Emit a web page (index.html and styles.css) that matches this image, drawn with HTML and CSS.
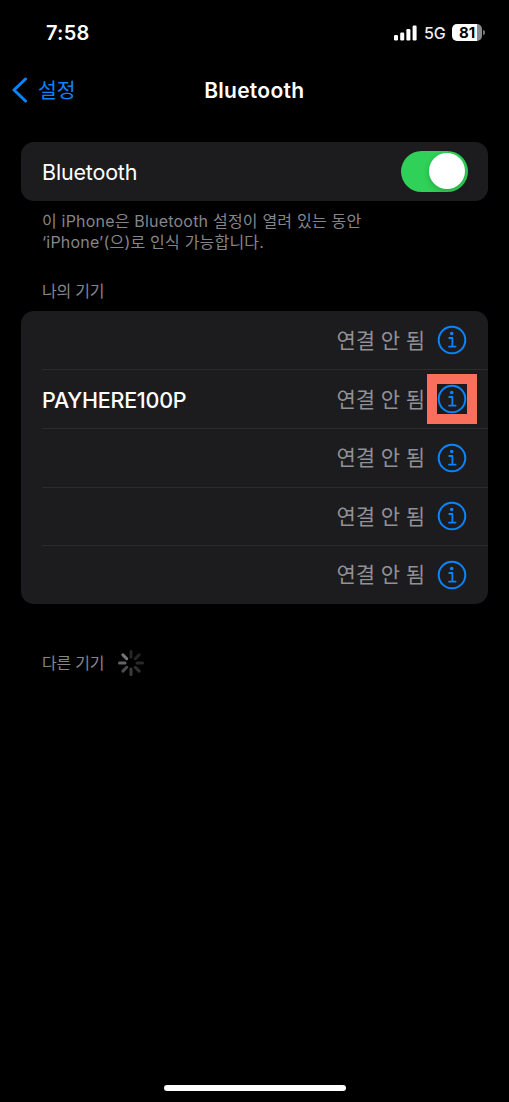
FILE: index.html
```
<!DOCTYPE html>
<html lang="ko">
<head>
<meta charset="utf-8">
<meta name="viewport" content="width=device-width">
<title>Bluetooth</title>
<link rel="stylesheet" href="styles.css">
</head>
<body>
<svg class="defs" aria-hidden="true">
  <symbol id="info" viewBox="0 0 30 30">
    <circle cx="15" cy="15" r="13.3" fill="none" stroke="currentColor" stroke-width="2"/>
    <circle cx="14.7" cy="8.5" r="1.8" fill="currentColor"/>
    <path d="M12.2 13h3.2v8.6M12 21.6h6.6" fill="none" stroke="currentColor" stroke-width="1.8" stroke-linecap="round" stroke-linejoin="round"/>
  </symbol>
</svg>
<div class="screen">
  <header class="status">
    <span class="time">7:58</span>
    <div class="indicators">
      <svg class="signal" viewBox="0 0 23 16" fill="#fff">
        <rect x="0" y="10" width="4" height="5.5" rx="1.2"/>
        <rect x="6.2" y="7.5" width="4" height="8" rx="1.2"/>
        <rect x="12.4" y="4" width="4" height="11.5" rx="1.2"/>
        <rect x="18.6" y="0.5" width="4" height="15" rx="1.2"/>
      </svg>
      <span class="network">5G</span>
      <div class="battery"><span class="level">81</span></div>
      <i class="battery-tip"></i>
    </div>
  </header>
  <nav class="nav">
    <a class="back">
      <svg class="chevron" viewBox="0 0 16 26"><path d="M13.5 2 2 13l11.5 11" fill="none" stroke="currentColor" stroke-width="3" stroke-linecap="round" stroke-linejoin="round"/></svg>
      <span class="back-label">설정</span>
    </a>
    <h1 class="title">Bluetooth</h1>
  </nav>
  <main>
    <section class="card toggle-card">
      <span class="label bt-label">Bluetooth</span>
      <span class="switch"><i class="knob"></i></span>
    </section>
    <p class="note"><span class="note-first">이 iPhone은 Bluetooth 설정이 열려 있는 동안</span><br><span class="note-second">‘iPhone’(으)로 인식 가능합니다.</span></p>
    <h2 class="heading">나의 기기</h2>
    <ul class="card list">
      <li class="row"><span class="state">연결 안 됨</span><svg class="info"><use href="#info"/></svg></li>
      <li class="row"><span class="label device">PAYHERE100P</span><span class="state">연결 안 됨</span><span class="target"><svg class="info"><use href="#info"/></svg></span></li>
      <li class="row"><span class="state">연결 안 됨</span><svg class="info"><use href="#info"/></svg></li>
      <li class="row"><span class="state">연결 안 됨</span><svg class="info"><use href="#info"/></svg></li>
      <li class="row"><span class="state">연결 안 됨</span><svg class="info"><use href="#info"/></svg></li>
    </ul>
    <div class="searching">
      <h2 class="heading">다른 기기</h2>
      <svg class="spinner" viewBox="-13 -13 26 26" stroke-width="3" stroke-linecap="round">
        <path d="M0-6v-5.5" stroke="#27272a"/>
        <path d="M0-6v-5.5" stroke="#252527" transform="rotate(45)"/>
        <path d="M0-6v-5.5" stroke="#29292b" transform="rotate(90)"/>
        <path d="M0-6v-5.5" stroke="#303033" transform="rotate(135)"/>
        <path d="M0-6v-5.5" stroke="#3c3c3f" transform="rotate(180)"/>
        <path d="M0-6v-5.5" stroke="#4b4b4e" transform="rotate(225)"/>
        <path d="M0-6v-5.5" stroke="#636366" transform="rotate(270)"/>
        <path d="M0-6v-5.5" stroke="#77777b" transform="rotate(315)"/>
      </svg>
    </div>
  </main>
  <div class="home"></div>
</div>
</body>
</html>
```

FILE: styles.css
```
* { box-sizing: border-box; }
body {
  margin: 0;
  background: #000;
  color: #fff;
  font-family: Inter, "Noto Sans CJK KR", sans-serif;
}
.defs { position: absolute; width: 0; height: 0; }
.screen { display: flex; flex-direction: column; height: 1102px; overflow: hidden; }
.status {
  display: flex;
  justify-content: space-between;
  align-items: center;
  height: 65px;
  padding: 0 24px 0 46px;
}
.time { font-size: 20px; font-weight: 600; letter-spacing: 0.2px; }
.indicators { display: flex; align-items: center; }
.signal { width: 23px; height: 16px; }
.network { width: 23px; margin-left: 7px; font-size: 16px; font-weight: 500; letter-spacing: -0.2px; color: #eee; }
.battery {
  display: flex;
  justify-content: center;
  align-items: center;
  width: 30px;
  height: 17px;
  margin-left: 5px;
  border-radius: 5px;
  background: linear-gradient(to right, #fff 0 25px, #8a8a8a 25px);
}
.level { color: #000; font-size: 15px; line-height: 17px; font-weight: 700; letter-spacing: 0; }
.battery-tip { width: 2px; height: 5px; margin-left: 1px; border-radius: 0 2px 2px 0; background: #777; }
.nav { display: grid; grid-template-columns: 1fr auto 1fr; align-items: center; height: 50px; padding-left: 11.5px; }
.back { display: flex; align-items: center; gap: 10.5px; color: #0a84ff; font-size: 20.5px; line-height: 30px; }
.back-label { padding-top: 2px; }
.chevron { width: 16px; height: 26px; }
.title { grid-column: 2; margin: 0 6px 0 -6px; font-size: 21px; font-weight: 600; letter-spacing: 0.28px; }
main { padding: 27px 21px 0; }
.card { background: #1c1c1e; border-radius: 13px; }
.toggle-card { display: flex; justify-content: space-between; align-items: center; height: 58.5px; padding: 0 20.5px 0 21px; }
.label { padding-top: 2px; font-size: 21.5px; letter-spacing: -0.18px; }
.device { padding-top: 1px; margin-right: auto; font-weight: 450; letter-spacing: -0.25px; }
.switch { display: flex; justify-content: flex-end; width: 67px; height: 41px; padding: 2.5px; border-radius: 21px; background: #30d158; }
.knob { width: 36px; height: 36px; border-radius: 50%; background: #fff; box-shadow: 0 2px 6px rgb(0 0 0 / 20%); }
.note { margin: 10px 21px 0; color: #85858b; font-size: 16px; line-height: 21px; letter-spacing: 0.2px; white-space: nowrap; }
.heading { margin: 0; color: #85858b; font-size: 16px; line-height: 24px; font-weight: 400; letter-spacing: -0.2px; }
main > .heading { margin: 26.5px 21px 7.5px; }
.list { height: 293.5px; margin: 0; padding: 1px 0 0; list-style: none; display: grid; grid-template-rows: repeat(4, 58.7px) 1fr; }
.row { display: flex; align-items: center; justify-content: flex-end; margin-left: 21px; padding-right: 22px; border-bottom: 1px solid #2b2b2e; }
.row:last-child { border-bottom-color: transparent; }
.state { padding-top: 1px; color: #919197; font-size: 21px; line-height: 30px; letter-spacing: -0.1px; }
.info { display: block; width: 30px; height: 30px; margin-left: 12px; margin-right: -1px; color: #0a84ff; }
.target { flex: none; width: 50px; height: 50px; margin-left: 2px; margin-right: -11px; padding: 10px; background: #fa6f5c; }
.target .info { margin: 0; background: #1c1c1e; }
.searching { display: flex; align-items: center; gap: 14px; margin: 46px 21px 0; }
.spinner { width: 26px; height: 26px; }
.home { width: 182px; height: 6px; margin: auto auto 11px; border-radius: 3px; background: #fff; }
```
